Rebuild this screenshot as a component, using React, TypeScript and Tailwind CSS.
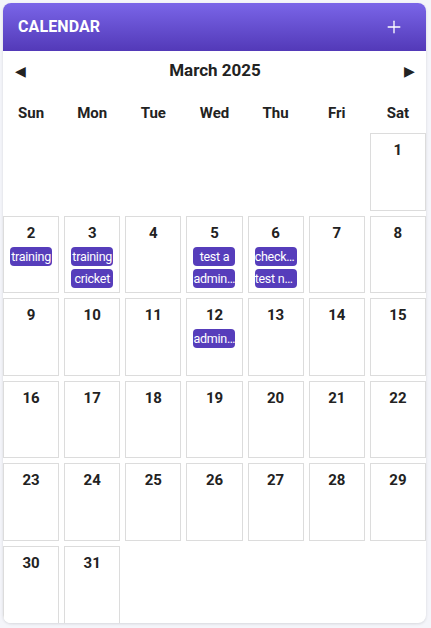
import { Plus } from 'lucide-react';

type Ev = string;

const events: Record<number, Ev[]> = {
  2: ['training'],
  3: ['training', 'cricket'],
  5: ['test a', 'admin meeting'],
  6: ['checkup', 'test new'],
  12: ['admin review'],
};

const weekDays = ['Sun', 'Mon', 'Tue', 'Wed', 'Thu', 'Fri', 'Sat'];

function DayCell({ day }: { day: number | null }) {
  if (day === null) return <div className="h-[77.6px]" />;
  const list = events[day] || [];
  return (
    <div className="h-[77.6px] border border-[#dcdcdc] bg-white pt-[6px] flex flex-col items-center">
      <div className="text-[15px] leading-[20px] font-bold text-[#222]">{day}</div>
      <div className="mt-[4px] flex flex-col gap-[3px] w-full items-center">
        {list.map((e, i) => (
          <div
            key={i}
            className="w-[42px] h-[19px] rounded-[4px] bg-[#563dbb] text-white text-[12.5px] tracking-[-0.25px] leading-[19px] text-center truncate"
          >
            {e}
          </div>
        ))}
      </div>
    </div>
  );
}

export default function App() {
  // March 2025 starts on Saturday
  const cells: (number | null)[] = [];
  for (let i = 0; i < 6; i++) cells.push(null);
  for (let d = 1; d <= 31; d++) cells.push(d);

  return (
    <div
      className="min-h-[628px] w-[431px] bg-[#f4f5fa] pt-[3px] pl-[3px]"
      style={{ fontFamily: 'Roboto, "Liberation Sans", sans-serif' }}
    >
      <div className="w-[423px] h-[620px] bg-white rounded-lg shadow-[0_1px_3px_rgba(0,0,0,0.12)] overflow-hidden">
        <div className="h-[48px] bg-gradient-to-b from-[#7a65e8] to-[#5339b8] flex items-center justify-between pl-[15px] pr-[22px]">
          <span className="text-white text-[16px] font-bold tracking-[0.1px]">CALENDAR</span>
          <Plus className="w-[20px] h-[20px] text-white" strokeWidth={1.6} />
        </div>

        <div className="h-[38px] pt-[2px] flex items-center justify-between pl-[12px] pr-[11px]">
          <button className="text-[#222] text-[14px] leading-none">◀</button>
          <span className="text-[17px] font-bold text-[#222]">March 2025</span>
          <button className="text-[#222] text-[14px] leading-none">▶</button>
        </div>

        <div className="grid grid-cols-7 gap-x-[5px] pt-[14px] pb-[10px]">
          {weekDays.map((d) => (
            <div key={d} className="text-center text-[15px] leading-[20px] font-bold text-[#222]">
              {d}
            </div>
          ))}
        </div>

        <div className="grid grid-cols-7 gap-x-[5px] gap-y-[5px]">
          {cells.map((d, i) => (
            <DayCell key={i} day={d} />
          ))}
        </div>
      </div>
    </div>
  );
}
